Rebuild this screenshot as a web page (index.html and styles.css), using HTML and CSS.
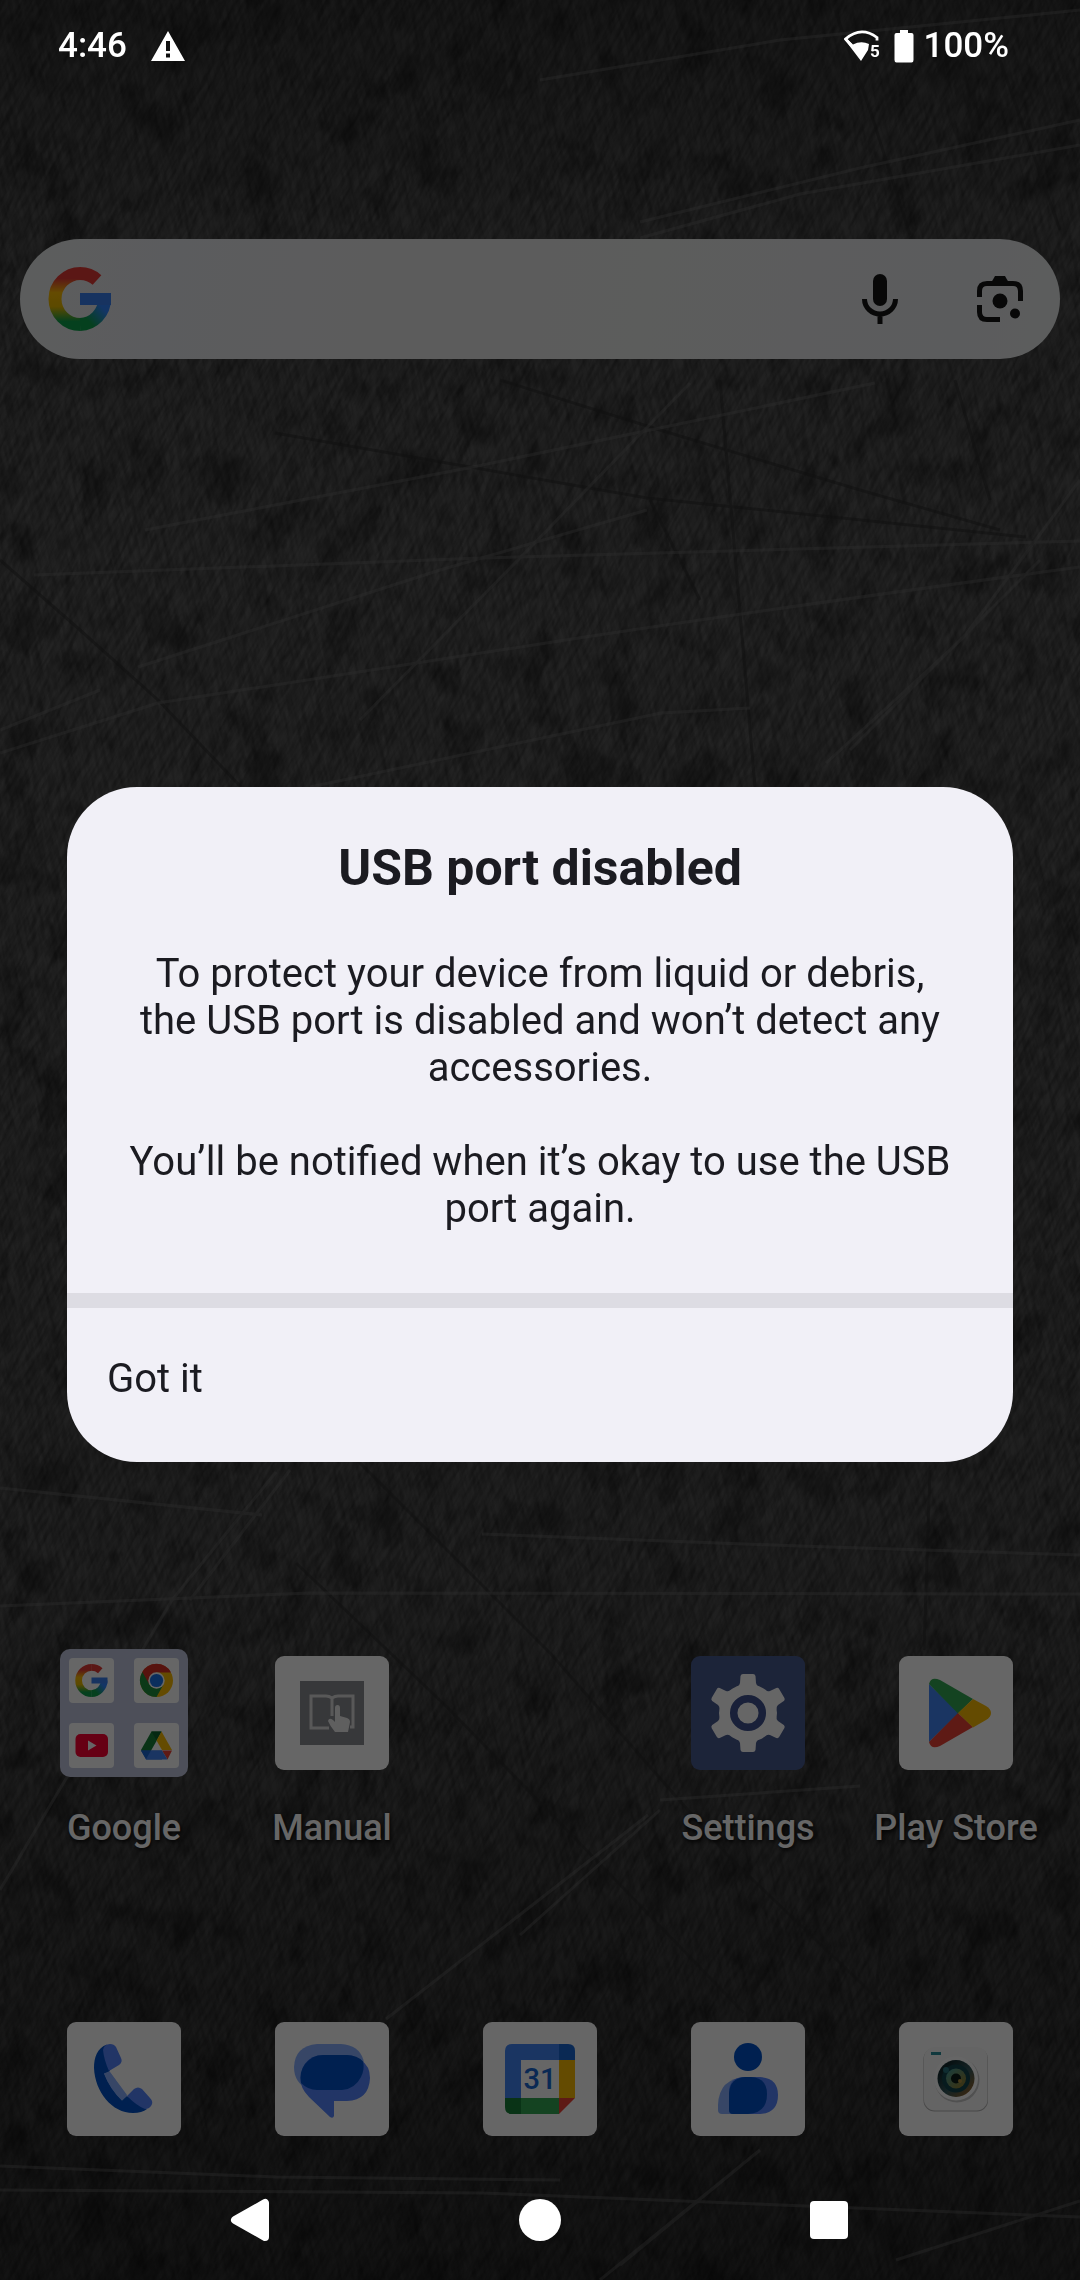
FILE: index.html
```html
<!DOCTYPE html>
<html lang="en">
<head>
    <meta charset="UTF-8">
    <meta name="viewport" content="width=device-width, initial-scale=1.0">
    <title>USB port disabled</title>
    <link rel="stylesheet" href="styles.css">
</head>
<body>
    <!-- Home screen -->
    <main class="launcher">
        <svg class="wallpaper" viewBox="0 0 1080 2280" preserveAspectRatio="xMidYMid slice" aria-hidden="true">
            <defs>
                <linearGradient id="wallShade" x1="0" y1="0" x2="0" y2="1">
                    <stop offset="0" stop-color="#3c3c3c"/>
                    <stop offset="0.1" stop-color="#505050"/>
                    <stop offset="0.25" stop-color="#585858"/>
                    <stop offset="0.7" stop-color="#505050"/>
                    <stop offset="0.85" stop-color="#404040"/>
                    <stop offset="1" stop-color="#303030"/>
                </linearGradient>
                <filter id="grain" x="0" y="0" width="100%" height="100%">
                    <feTurbulence type="fractalNoise" baseFrequency="0.25 0.04" numOctaves="3" seed="4"/>
                    <feColorMatrix values="0 0 0 0 0  0 0 0 0 0  0 0 0 0 0  2 0 0 0 -0.7"/>
                </filter>
                <filter id="blotch" x="0" y="0" width="100%" height="100%">
                    <feTurbulence type="fractalNoise" baseFrequency="0.025 0.02" numOctaves="5" seed="11"/>
                    <feColorMatrix values="0 0 0 0 0  0 0 0 0 0  0 0 0 0 0  0 4 0 0 -2.1"/>
                </filter>
            </defs>
            <rect width="1080" height="2280" fill="url(#wallShade)"/>
            <rect x="-900" y="-400" width="2900" height="3100" filter="url(#grain)" opacity="0.3" transform="rotate(28 540 1140)"/>
            <rect x="-900" y="-400" width="2900" height="3100" filter="url(#grain)" opacity="0.25" transform="rotate(-12 540 1140)"/>
            <rect width="1080" height="2280" filter="url(#blotch)" opacity="0.3"/>
            <g class="scratch-dark">
                <path d="M0 560L80 630L158 700L241 787"/>
                <path d="M275 433L647 498L1026 537"/>
                <path d="M835 10L870 110L910 235"/>
                <path d="M1000 60L1060 230"/>
                <path d="M500 380L660 430L860 490L1000 530"/>
                <path d="M955 380L990 500"/>
                <path d="M650 500L700 600"/>
                <path d="M720 380L755 787"/>
                <path d="M296 1563L448 1708L599 1863L744 2013"/>
                <path d="M358 1461L551 1654L730 1858L882 2003"/>
                <path d="M900 1780L875 2000M930 1470L924 1650"/>
            </g>
            <g class="scratch-light">
                <path d="M158 703Q380 668 585 637T1080 567"/>
                <path d="M34 575L482 558L1080 541"/>
                <path d="M145 530L468 468L875 383"/>
                <path d="M138 667L440 570L647 510"/>
                <path d="M310 787L661 713L750 708"/>
                <path d="M0 753L158 703M0 730L100 690"/>
                <path d="M640 238L800 194L1080 145M640 222L860 168L1080 120"/>
                <path d="M826 763L964 637L1080 480M850 750L1040 560"/>
                <path d="M360 720L520 558L690 383"/>
                <path d="M540 80L780 40L1080 10"/>
                <path d="M482 1534L800 1546L1080 1555M0 1606L310 1593L1080 1594M0 1488L262 1515"/>
                <path d="M276 1472L172 1600L0 1890M290 1470L190 1600"/>
                <path d="M648 1815L386 2019M660 1810L520 1935M660 1800L860 1786"/>
                <path d="M0 2166L276 2177L560 2180M0 2190L482 2193L1080 2217"/>
                <path d="M744 2163L620 2265M760 2150L600 2280M1080 2201L896 2260"/>
            </g>
        </svg>

        <div class="search-bar">
            <a href="#google" aria-label="Google">
                <svg class="google-g" viewBox="0 0 64 64">
                    <defs>
                        <linearGradient id="gLeft" gradientUnits="userSpaceOnUse" x1="20" y1="0" x2="20" y2="64">
                            <stop offset="0.18" stop-color="#e33b36"/>
                            <stop offset="0.4" stop-color="#fbbc04"/>
                            <stop offset="0.62" stop-color="#e6b800"/>
                            <stop offset="0.85" stop-color="#0ea04b"/>
                        </linearGradient>
                        <linearGradient id="gRight" gradientUnits="userSpaceOnUse" x1="36" y1="58" x2="58" y2="38">
                            <stop offset="0.2" stop-color="#0ea04b"/>
                            <stop offset="0.85" stop-color="#3186ff"/>
                        </linearGradient>
                    </defs>
                    <g id="gLogo" fill="none" stroke-width="13">
                        <path stroke="#e33b36" d="M32 6.5A25.5 25.5 0 0 1 49 13"/>
                        <path stroke="url(#gLeft)" d="M32.5 6.5A25.5 25.5 0 0 0 32.5 57.5"/>
                        <path stroke="url(#gRight)" d="M32 57.5A25.5 25.5 0 0 0 56.5 32"/>
                        <path stroke="#3a80f0" stroke-width="12" d="M32 32H63"/>
                    </g>
                </svg>
            </a>
            <button type="button" class="search-action" aria-label="Voice search">
                <svg viewBox="0 0 60 60">
                    <rect x="23" y="5" width="14" height="32" rx="7" fill="#161616"/>
                    <path d="M14.500 30A15.500 15 0 0 0 45.500 30M30 45V55" fill="none" stroke="#161616" stroke-width="5"/>
                </svg>
            </button>
            <button type="button" class="search-action" aria-label="Search with Lens">
                <svg viewBox="0 0 60 60">
                    <path d="M9.500 28V22Q9.500 14.500 17 14.500H43Q50.500 14.500 50.500 22V32M9.500 36V43Q9.500 50.500 17 50.500H30" fill="none" stroke="#161616" stroke-width="5"/>
                    <path d="M21 14L25 7H35L39 14Z" fill="#161616"/>
                    <circle cx="30" cy="32" r="7.500" fill="#161616"/>
                    <circle cx="45" cy="44.500" r="5" fill="#161616"/>
                </svg>
            </button>
        </div>

        <!-- Apps on the last home row -->
        <nav class="apps" aria-label="Apps">
            <a class="app" href="#google-folder">
                <span class="folder">
                    <svg viewBox="0 0 45 45"><svg x="6" y="6" width="33" height="33" viewBox="0 0 64 64"><use href="#gLogo"/></svg></svg>
                    <svg viewBox="0 0 45 45">
                        <circle cx="22.500" cy="22.500" r="16.500" fill="#fbbc04"/>
                        <path d="M8 14.500A16.500 16.500 0 0 1 37 14.500H22.500L15 27Z" fill="#d93025"/>
                        <path d="M8.300 14A16.500 16.500 0 0 0 22.500 39L29.500 26.500H15.500Z" fill="#1e8e3e"/>
                        <circle cx="22.500" cy="22.500" r="8.200" fill="#fff"/>
                        <circle cx="22.500" cy="22.500" r="6.600" fill="#1a73e8"/>
                    </svg>
                    <svg viewBox="0 0 45 45">
                        <rect x="6.500" y="11" width="32.500" height="23" rx="5" fill="#ff0033"/>
                        <path d="M19 17.500V27.500L27.500 22.500Z" fill="#fff"/>
                    </svg>
                    <svg viewBox="0 0 45 45">
                        <path d="M17.500 8.500H27.500L22.500 18L12.500 35.500L7 27Z" fill="#188038"/>
                        <path d="M17.500 8.500H27.500L22.500 17.500Z" fill="#0d652d"/>
                        <path d="M27.500 8.500L38 27H28L22.500 17.500Z" fill="#fbbc04"/>
                        <path d="M7 27.500H28V36.500H12Z" fill="#2f6fe0"/>
                        <path d="M7 27.500H17L12 36Z" fill="#1967d2"/>
                        <path d="M28 27.500H38L33.500 36.500Z" fill="#ea4335"/>
                        <path d="M17 27.500H28L33.500 36.500H12Z" fill="#4285f4"/>
                    </svg>
                </span>
                <span class="app-label">Google</span>
            </a>
            <a class="app" href="#manual">
                <svg class="tile" viewBox="0 0 114 114">
                    <rect x="25" y="25" width="64" height="64" fill="#8a8c91"/>
                    <path d="M57 42Q54 40 51 40H36V72H54M57 42Q60 40 63 40H78V71H75M57 42V60" fill="none" stroke="#ddd" stroke-width="3"/>
                    <path d="M60 52Q60 49 62.500 49T65 52V60L72 62Q75 63 75 66L73 76H60Q55 70 53 65Q54 61 58 64L60 66Z" fill="#eee"/>
                </svg>
                <span class="app-label">Manual</span>
            </a>
            <span></span>
            <a class="app" href="#settings">
                <svg class="tile tile-settings" viewBox="0 0 114 114">
                    <g fill="#fff">
                        <circle cx="57" cy="57" r="29"/>
                        <path id="tooth" d="M42 33Q48 31 49 27L49.500 20Q50 18 52 18H62Q64 18 64.500 20L65 27Q66 31 72 33Z"/>
                        <use href="#tooth" transform="rotate(60 57 57)"/>
                        <use href="#tooth" transform="rotate(120 57 57)"/>
                        <use href="#tooth" transform="rotate(180 57 57)"/>
                        <use href="#tooth" transform="rotate(240 57 57)"/>
                        <use href="#tooth" transform="rotate(300 57 57)"/>
                    </g>
                    <circle cx="57" cy="57" r="14.300" fill="none" stroke="#3f528e" stroke-width="7.500"/>
                </svg>
                <span class="app-label">Settings</span>
            </a>
            <a class="app" href="#play-store">
                <svg class="tile" viewBox="0 0 114 114">
                    <path d="M30 28V86L60 57Z" fill="#4285f4"/>
                    <path d="M30 28Q32 20 41 24L74 43L59 57.500Z" fill="#34a853"/>
                    <path d="M30 86Q32 94 41 90L74 71L59 57Z" fill="#ea4335"/>
                    <path d="M74 43L87 50Q92 53 92 57T87 64L74 71.500L59 57Z" fill="#fbbc04"/>
                </svg>
                <span class="app-label">Play Store</span>
            </a>
        </nav>

        <!-- Dock -->
        <nav class="dock" aria-label="Favorites">
            <a class="app" href="#phone" aria-label="Phone">
                <svg class="tile" viewBox="0 0 114 114">
                    <path d="M36 51L42 49L60 74L55 79Q42 68 36 51Z" fill="#8ab0ff"/>
                    <path d="M40 22.500C30 26 27 36 27 46C28 70 45 91 66 91Q75 91 80 87L60 74L55 78.500Q43 67 37 51.500L43 49L38 26Z" fill="#0052c8"/>
                    <path d="M43 50L60 73L55 78.500Q43 67 37 51.500Z" fill="#8ab0ff"/>
                    <path d="M36 28Q37 22 43 22Q47 22 49 25L54 36Q56 40 52 43L42 49Q37 38 36 28Z" fill="#5684ff"/>
                    <path d="M60 74L67 67Q71 64 75 67L83 76Q87 80 84 84Q82 87 78 87Q70 84 60 74Z" fill="#5684ff"/>
                </svg>
            </a>
            <a class="app" href="#messages" aria-label="Messages">
                <svg class="tile" viewBox="0 0 114 114">
                    <path d="M42 22H66Q84 23 88.500 38V68H35Q19 62 19 45Q20 24 42 22Z" fill="#8ab0ff"/>
                    <path d="M48 33H72Q78 33 86 38Q95 44 95 56Q94 78 72 79H59V94Q58 97 55 95L34 75Q25 66 25.500 56Q27 34 48 33Z" fill="#5684ff"/>
                    <path d="M48 33H72Q82 33 88 39.500Q90 47 86 55Q80 67 67 68H42Q33 68 26 61Q24 50 30 42Q37 33 48 33Z" fill="#0052c8"/>
                </svg>
            </a>
            <a class="app" href="#calendar" aria-label="Calendar">
                <svg class="tile" viewBox="0 0 114 114">
                    <path d="M76 22V38H38V76H22V29Q22 22 29 22Z" fill="#4285f4"/>
                    <path d="M76 22H85Q92 22 92 29V38H76Z" fill="#1967d2"/>
                    <path d="M76 38H92V76H76Z" fill="#fbbc04"/>
                    <path d="M38 76H76V92H38Z" fill="#34a853"/>
                    <path d="M22 76H38V92H29Q22 92 22 85Z" fill="#188038"/>
                    <path d="M76 76H92L76 92Z" fill="#ea4335"/>
                    <text class="calendar-day" x="57" y="67">31</text>
                </svg>
            </a>
            <a class="app" href="#contacts" aria-label="Contacts">
                <svg class="tile" viewBox="0 0 114 114">
                    <circle cx="57" cy="35" r="14" fill="#0052c8"/>
                    <path d="M55 55H64V92H31Q27 92 27 88V83Q28 56 55 55Z" fill="#8ab0ff"/>
                    <path d="M52 55H69Q87 56 87 73Q87 91 69 92H42Q38 92 38 88V70Q38 56 52 55Z" fill="#5684ff"/>
                    <path d="M54 55H60Q76 56 76 72Q76 91 57 92H42Q38 92 38 88V71Q39 56 54 55Z" fill="#0052c8"/>
                </svg>
            </a>
            <a class="app" href="#camera" aria-label="Camera">
                <svg class="tile" viewBox="0 0 114 114">
                    <defs>
                        <linearGradient id="lens" x1="0" y1="0" x2="1" y2="1">
                            <stop offset="0.2" stop-color="#122b2e"/>
                            <stop offset="0.55" stop-color="#32565a"/>
                            <stop offset="1" stop-color="#a8641c"/>
                        </linearGradient>
                        <linearGradient id="lensInner" x1="0" y1="0" x2="1" y2="1">
                            <stop offset="0" stop-color="#3f9c9c"/>
                            <stop offset="1" stop-color="#9c7a22"/>
                        </linearGradient>
                    </defs>
                    <rect x="24.500" y="26" width="64.500" height="63.500" rx="11" fill="#b4b4b4"/>
                    <rect x="25" y="25" width="63.500" height="63.500" rx="11" fill="#fbfbfb"/>
                    <rect x="32" y="30" width="10" height="3" fill="#2a8c98"/>
                    <circle cx="58" cy="58" r="22.500" fill="#c8c8c8"/>
                    <circle cx="57" cy="56.500" r="22" fill="#fff"/>
                    <circle cx="57" cy="56.500" r="18.500" fill="url(#lens)"/>
                    <circle cx="57" cy="56.500" r="14" fill="#12454c"/>
                    <circle cx="57" cy="56.500" r="10" fill="url(#lensInner)"/>
                    <circle cx="57" cy="56.500" r="5" fill="#0a1c18"/>
                    <circle cx="47" cy="48" r="3" fill="#26707a"/>
                    <circle cx="61" cy="59" r="2" fill="#b09040"/>
                </svg>
            </a>
        </nav>
    </main>

    <!-- System layer over the dimmed home screen -->
    <div class="overlay">
        <header class="status-bar">
            <time>4:46</time>
            <svg class="icon-warning" viewBox="0 0 34 30">
                <path fill-rule="evenodd" d="M17 0L34 30H0ZM15 10V20H19V10ZM15 22.500V26.500H19V22.500Z" fill="#fff"/>
            </svg>
            <svg class="icon-wifi" viewBox="0 0 36 32">
                <path d="M7 15L1.500 9Q17 -4.500 33 7.500V10.500" fill="none" stroke="#fff" stroke-width="2.800"/>
                <path d="M3 9L9 14.500Q17 10.500 25 14L24 20L17 31L1 10Z" fill="#fff"/>
                <text class="wifi-band" x="26" y="27">5</text>
            </svg>
            <svg class="icon-battery" viewBox="0 0 20 34">
                <path d="M6 1H14V4H17.500Q19.500 4 19.500 6V31Q19.500 33.500 17.500 33.500H2.500Q0.500 33.500 0.500 31V6Q0.500 4 2.500 4H6Z" fill="#fff"/>
            </svg>
            <span>100%</span>
        </header>

        <div class="dialog-area">
            <section class="dialog" role="alertdialog" aria-labelledby="dialogTitle" aria-describedby="dialogText">
                <h1 id="dialogTitle">USB port disabled</h1>
                <div id="dialogText" class="dialog-text">
                    <p>To protect your device from liquid or debris, the USB port is disabled and won’t detect any accessories.</p>
                    <p>You’ll be notified when it’s okay to use the USB port again.</p>
                </div>
                <button type="button" class="dialog-button">Got it</button>
            </section>
        </div>

        <nav class="nav-bar" aria-label="Navigation">
            <button type="button" aria-label="Back">
                <svg viewBox="0 0 48 48"><path d="M38 7V41L8 24Z" fill="#fff" stroke="#fff" stroke-width="8" stroke-linejoin="round"/></svg>
            </button>
            <button type="button" aria-label="Home">
                <svg viewBox="0 0 48 48"><circle cx="24" cy="24" r="21" fill="#fff"/></svg>
            </button>
            <button type="button" aria-label="Recent apps">
                <svg viewBox="0 0 48 48"><rect x="5" y="5" width="38" height="38" rx="4" fill="#fff"/></svg>
            </button>
        </nav>
    </div>
</body>
</html>
```
FILE: styles.css
```css
* {
    box-sizing: border-box;
}
body {
    margin: 0;
    font-family: Roboto, "Liberation Sans", sans-serif;
    background-color: #1c1c1c;
}
svg {
    display: block;
}
button {
    padding: 0;
    border: none;
    background: none;
    font: inherit;
    cursor: pointer;
}
a {
    color: inherit;
    text-decoration: none;
}

/* Home screen */
.launcher {
    position: relative;
    display: flex;
    flex-direction: column;
    min-height: 100vh;
    padding: 239px 20px 144px;
}
.wallpaper {
    position: absolute;
    inset: 0;
    z-index: -1;
    width: 100%;
    height: 100%;
}
.scratch-dark, .scratch-light {
    fill: none;
    stroke-width: 3;
}
.scratch-dark {
    stroke: #282828;
    opacity: 0.5;
}
.scratch-light {
    stroke: #777;
    opacity: 0.35;
}
.search-bar {
    display: flex;
    align-items: center;
    gap: 60px;
    height: 120px;
    margin-bottom: auto;
    padding: 0 30px 0 28px;
    border-radius: 60px;
    background: linear-gradient(100deg, #e6e9e9, #e4e6ea 15%, #e6e6e6 40%, #e6e8e7 60%, #e4e6e9 90%, #e6e9e9);
}
.search-bar a {
    margin-right: auto;
}
.google-g {
    width: 64px;
    height: 64px;
}
.search-action svg {
    width: 60px;
    height: 60px;
}
.apps, .dock {
    display: grid;
    grid-template-columns: repeat(5, 1fr);
}
.apps {
    margin-bottom: 173px;
}
.app {
    display: flex;
    flex-direction: column;
    align-items: center;
    justify-content: space-between;
}
.tile {
    width: 114px;
    height: 114px;
    border-radius: 9px;
    background-color: #fff;
}
.apps .tile {
    margin: 7px 0;
}
.tile-settings {
    background-color: #485a90;
}
.folder {
    display: grid;
    grid-template-columns: 45px 45px;
    gap: 20px;
    padding: 9px;
    border-radius: 10px;
    background-color: #c0c5de;
}
.folder > svg {
    width: 45px;
    height: 45px;
    border-radius: 4px;
    background-color: #fff;
}
.app-label {
    margin-top: 30px;
    color: #fff;
    font-size: 36px;
    font-weight: 500;
    line-height: 42px;
    text-shadow: 1px 2px 4px #000;
    white-space: nowrap;
}
.calendar-day {
    font-size: 29px;
    font-weight: 500;
    fill: #1967d2;
    text-anchor: middle;
}

/* System layer */
.overlay {
    position: fixed;
    inset: 0;
    display: flex;
    flex-direction: column;
    background-color: rgba(0, 0, 0, 0.6);
}
.status-bar {
    display: flex;
    align-items: center;
    height: 88px;
    padding: 3px 71px 0 58px;
    color: #fff;
    font-size: 35px;
    font-weight: 500;
}
.icon-warning {
    width: 34px;
    height: 30px;
    margin: 0 auto 0 24px;
}
.icon-wifi {
    width: 36px;
    height: 32px;
}
.wifi-band {
    font-size: 17px;
    font-weight: 700;
    fill: #fff;
}
.icon-battery {
    width: 20px;
    height: 34px;
    margin: 0 10px 0 14px;
}
.dialog-area {
    display: flex;
    flex: 1;
    align-items: center;
    justify-content: center;
    padding: 0 67px;
}
.dialog {
    flex: 1;
    overflow: hidden;
    border-radius: 70px;
    color: #1b1b21;
    background-color: #f1f0f7;
    font-size: 40px;
    line-height: 47px;
}
.dialog h1 {
    margin: 52px 0;
    font-size: 50px;
    line-height: 59px;
    text-align: center;
}
.dialog-text {
    padding: 0 60px 61px;
    border-bottom: 15px solid #dddce3;
    text-align: center;
}
.dialog-text p {
    margin: 0 0 47px;
}
.dialog-text p:last-child {
    margin-bottom: 0;
}
.dialog-button {
    display: block;
    width: 100%;
    padding: 47px 40px 60px;
    color: inherit;
    text-align: left;
}
.nav-bar {
    display: flex;
    align-items: center;
    justify-content: center;
    gap: 241px;
    height: 120px;
}
.nav-bar svg {
    width: 48px;
    height: 48px;
}
```
